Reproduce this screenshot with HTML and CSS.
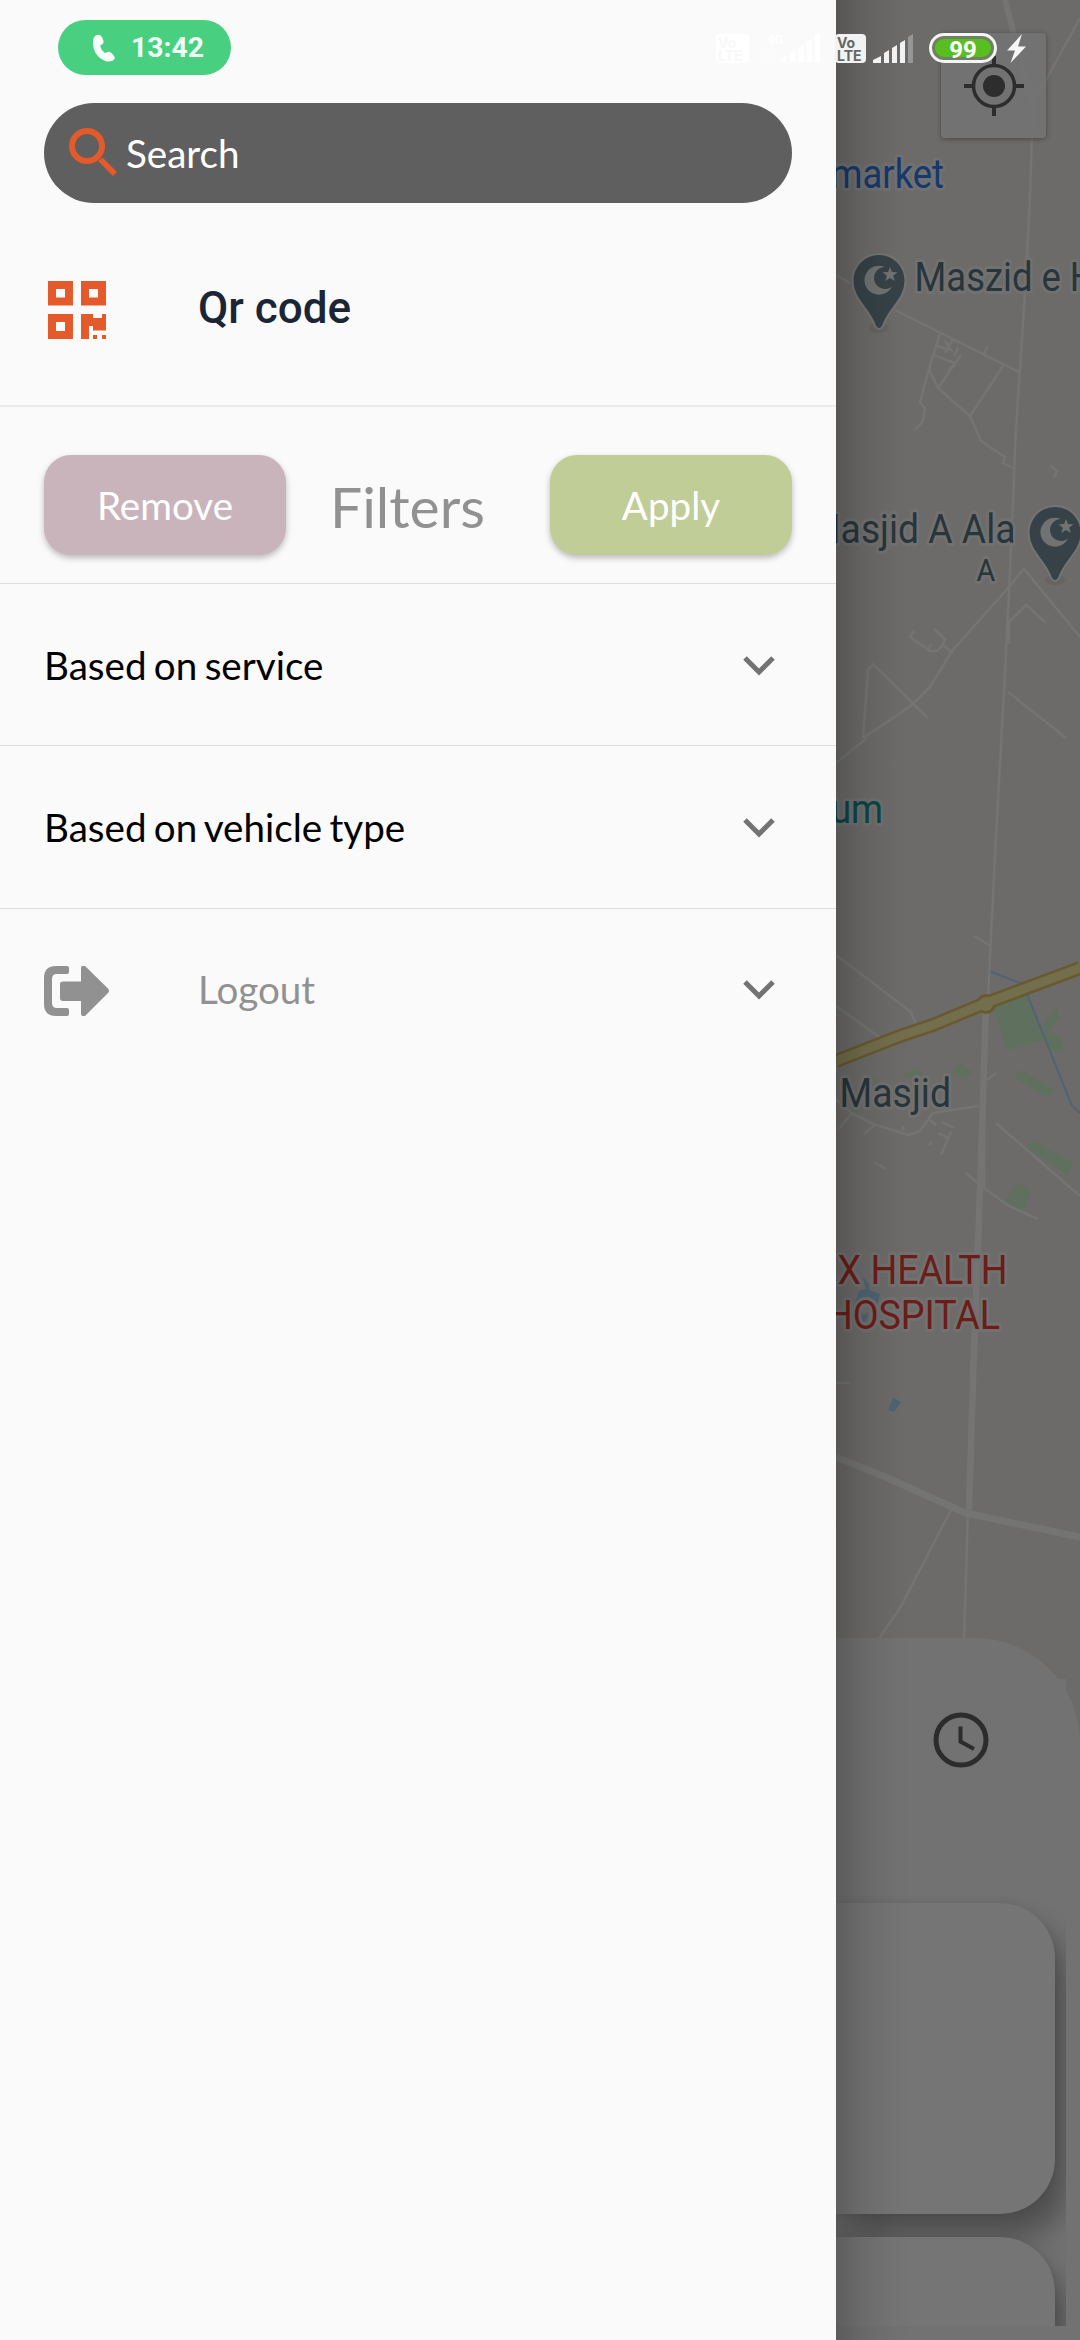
FILE: index.html
```html
<!DOCTYPE html>
<html lang="en">
<head>
<meta charset="utf-8">
<title>Menu</title>
<link rel="stylesheet" href="styles.css">
</head>
<body>
<div class="screen">
  <aside class="drawer">
    <div class="search">
      <svg class="search-icon" viewBox="0 0 48 48"><circle cx="18" cy="18" r="15" fill="none" stroke="#e55a2b" stroke-width="6"/><path d="M29 33 L33.500 29.500 L48 44 L44 48 L30 34Z" fill="#e55a2b"/></svg>
      <span>Search</span>
    </div>
    <div class="qr-row">
      <svg class="qr-icon" viewBox="0 0 58 58"><path fill="#e55a2b" fill-rule="evenodd" d="M0 0h25v24.500H0zM8 8v8.500h9V8zM33 0h25v24.500H33zM41 8v8.500h9V8zM0 33h25v25H0zM8 41v9h9v-9zM33 33h12v4h9v-4h4v16.500H45V45h-4v13h-8zM45 54h4v4h-4zM54 54h4v4h-4z"/></svg>
      <span>Qr code</span>
    </div>
    <div class="filters">
      <button class="btn remove">Remove</button>
      <h2>Filters</h2>
      <button class="btn apply">Apply</button>
    </div>
    <div class="row ruled">
      <span>Based on service</span>
      <svg class="chevron" viewBox="0 0 32 20"><path d="M2 2 L16 16 L30 2" /></svg>
    </div>
    <div class="row ruled">
      <span>Based on vehicle type</span>
      <svg class="chevron" viewBox="0 0 32 20"><path d="M2 2 L16 16 L30 2" /></svg>
    </div>
    <div class="row logout">
      <svg class="logout-icon" viewBox="0 0 65 50"><path fill="#919191" d="M12 0h11q2 0 2 2v4q0 2-2 2H13q-5 0-5 5v24q0 5 5 5h10q2 0 2 2v4q0 2-2 2H12Q0 50 0 38V12Q0 0 12 0zM37 2q0-3 4-2L64 22.500q2 2.500 0 4.500L41 50q-4 1-4-2.500V35H19q-3 0-3-3V18q0-2.500 3-2.500h18z"/></svg>
      <span>Logout</span>
      <svg class="chevron" viewBox="0 0 32 20"><path d="M2 2 L16 16 L30 2" /></svg>
    </div>
  </aside>

  <main class="backdrop">
    <svg class="map" viewBox="836 0 244 1740">
      <defs>
        <g id="pin">
          <ellipse cx="0" cy="47" rx="10" ry="5" fill="#656462"/>
          <path d="M0 -27C15 -27 26.500 -15 26.500 0C26.500 19 9 28 4 45Q0 51 -4 45C-9 28 -26.500 19 -26.500 0C-26.500 -15 -15 -27 0 -27Z" fill="#364247" stroke="#737474" stroke-width="2"/>
          <path d="M6 -14A14.500 14.500 0 1 0 13 5.500A11 11 0 1 1 6 -14Z" fill="#717373"/>
          <path d="M11 -14l2 5 5.500.3-4.300 3.500 1.600 5.200-4.800-3-4.700 3 1.600-5.200-4.300-3.500 5.500-.3z" fill="#717373"/>
        </g>
      </defs>
      <rect x="836" width="244" height="1740" fill="#6c6b69"/>
      <g fill="#60705f">
        <path d="M993 1006L1026 995L1045 1039L1007 1051ZM1042 1027L1055 1007L1060 1017L1047 1034ZM1045 1036L1050 1032L1061 1039L1065 1049L1053 1054ZM1022 1070L1057 1091L1047 1097L1014 1077ZM951 1073L960 1061L972 1072L965 1080ZM903 1075L915 1069L923 1074L916 1081ZM874 1077L880 1080L874 1086ZM850 1108L860 1105L856 1114ZM1033 1140L1074 1163L1068 1176L1027 1147ZM1018 1182L1032 1190L1023 1210L1004 1202Z"/>
      </g>
      <path d="M989 971L1023 984L1072 1106L1080 1113" fill="none" stroke="#4f6475" stroke-width="2"/>
      <g fill="#4e6373"><path d="M862 1276l7 8v6l11 4-3 12h-23l5-15 7-2zM861 1312l3 3 4-3q0 9-4 10-4 0-3-10zM893 1398l8 4-7 10-6-2z"/></g>
      <g class="roads">
        <path d="M1033 90C1030 260 1020 350 1015 450C1008 650 1000 740 988 999M1080 18L1046 80Q1040 95 1033 96M836 275L850 283M895 310L1019 372M940 334L930 365V372L938 388L970 416L981 441L1005 457L1003 463L1015 469M930 365L920 402L925 408L923 421L915 430M938 388L961 355M970 416L1003 366M937 346L951 350L945 341M933 355L955 363L948 371M945 353L953 339M958 347L954 356M984 353L988 346M1051 466L1057 471L1054 478M863 738L868 670L873 664L928 718M863 738L912 705L930 687L952 651L1008 588L1024 569L1080 637M953 653L943 645L937 651H930L910 637L914 631M934 629L945 639L943 645M928 650L931 644M1009 644V622L1026 605L1045 622M1008 692L1066 738M836 763L867 738M836 955L911 1012L916 1024M836 1006L882 1039M974 936L989 945M987 1080L996 1073"/>
        <path d="M836 1099L853 1114L876 1125L909 1135L920 1131L933 1113L978 1106M839 1129L852 1113M864 1134L876 1124M903 1131V1126M930 1120L936 1125M942 1122L954 1128M938 1133L948 1138M932 1142L929 1145M951 1132L941 1155M996 1123L1080 1196M874 1162L886 1169M966 1173L984 1188L1009 1206L1038 1219M984 1080V1188M836 1383H850M951 1510L900 1608L878 1640M968 1510L964 1640"/>
      </g>
      <g fill="none" stroke="#747473">
        <path d="M1005 0L1031 100" stroke-width="6"/>
        <path d="M986 1005L980 1190L974 1350L969 1510" stroke-width="6.500"/>
        <path d="M836 1457L890 1479L965 1513L1080 1537" stroke-width="7"/>
      </g>
      <path d="M836 1061L900 1036L933 1025L981 1005L1080 968" fill="none" stroke="#68592f" stroke-width="14"/>
      <circle cx="986" cy="1004" r="10" fill="#68592f"/>
      <path d="M836 1061L900 1036L933 1025L981 1005L1080 968" fill="none" stroke="#736e4c" stroke-width="9"/>
      <circle cx="986" cy="1004" r="7" fill="#736e4c"/>
      <use href="#pin" x="879" y="281"/>
      <use href="#pin" x="1055" y="533"/>
      <g class="labels">
        <text class="shop end" transform="translate(944 187.500) scale(.9 1)">market</text>
        <text transform="translate(914.500 291) scale(.9 1)">Maszid e H</text>
        <text class="end" transform="translate(1015.500 542.500) scale(.92 1)">Masjid A Ala</text>
        <text class="small" transform="translate(976.500 581) scale(.9 1)">A</text>
        <text class="museum end" transform="translate(883 822.500) scale(.9 1)">um</text>
        <text transform="translate(839.500 1107) scale(.925 1)">Masjid</text>
        <text class="health end" transform="translate(1007.500 1283.500) scale(.94 1)">X HEALTH</text>
        <text class="health end" transform="translate(1000 1329) scale(.94 1)">HOSPITAL</text>
      </g>
    </svg>
    <div class="locate">
      <svg viewBox="0 0 60 60"><g fill="none" stroke="#2d2d2d"><circle cx="30" cy="30" r="20.500" stroke-width="3.500"/><path d="M30 0V9M30 51V60M0 30H9M51 30H60" stroke-width="4"/></g><circle cx="30" cy="30" r="11" fill="#2d2d2d"/></svg>
    </div>
    <section class="sheet">
      <svg class="clock" viewBox="0 0 56 56"><g fill="none" stroke="#2c2c2c"><circle cx="28" cy="28" r="25" stroke-width="5"/><path d="M27.500 14.500V29.500L41 37" stroke-width="4"/></g></svg>
      <div class="list">
        <div class="card"></div>
        <div class="card"></div>
      </div>
    </section>
    <div class="edge-shadow"></div>
  </main>

  <header class="status">
    <div class="call">
      <svg viewBox="0 0 22 28"><path d="M2 2Q6-1 9 3L10.500 7Q11 10 7.500 11Q7 15 12 19L16 17.500Q20 19 22 24Q20 28 14 27.500Q0 23 0 8Q0 4 2 2Z" fill="#f7fff9"/></svg>
      <span>13:42</span>
    </div>
    <div class="indicators">
      <div class="volte faint"><span>Vo</span><span>LTE</span></div>
      <svg class="signal-faint" viewBox="0 0 57 32"><text x="4" y="12" font-size="13" font-family="Roboto" font-weight="700" fill="#fff">4G</text><path d="M3 18v12M9 18v12M17 30v-3l6-3v6zM27 30v-8l5-3v11zM36 30v-14l5-3v17zM44 30v-20l5-3v23zM52 30v-26l5-3v29z" fill="#fff" stroke="#fff" stroke-width=".5"/></svg>
      <div class="volte"><span>Vo</span><span>LTE</span></div>
      <svg class="signal" viewBox="0 0 41 29"><path d="M0 29v-3l8-4v7zM11 29v-10l5-3v13zM19 29v-15l5-3v18zM27 29v-20l5-3v23z" fill="#f2f2f2"/><path d="M35 29v-26l5-3v29z" fill="#969696"/></svg>
      <div class="battery"><span>99</span></div>
      <svg class="bolt" viewBox="0 0 19 29"><path d="M15 0L0 16.500H8L3.500 29L19 12.500H11Z" fill="#f5f5f5"/></svg>
    </div>
  </header>
</div>
</body>
</html>
```
FILE: styles.css
```css
* { box-sizing: border-box; }
body { margin: 0; background: #6c6b69; font-family: Lato, "Liberation Sans", sans-serif; }
svg { display: block; flex: none; }
.screen { position: relative; display: grid; grid-template-columns: 836px 244px; width: 1080px; height: 2340px; overflow: hidden; }

.drawer { background: #fafafa; padding-top: 103px; font-size: 38.600px; word-spacing: -2.500px; color: #000; }
.search { display: flex; align-items: center; gap: 9px; height: 100px; margin: 0 44px; padding-left: 25px; border-radius: 50px; background: #5f5f5f; color: #fff; }
.search-icon { width: 48px; height: 48px; margin-top: -2px; }
.qr-row { display: flex; align-items: center; height: 204px; padding: 12px 48px 0; gap: 92px; border-bottom: 2px solid #ececec; font: 500 44px Roboto, sans-serif; word-spacing: 0; color: #1b2535; }
.qr-icon { width: 58px; height: 58px; }
.qr-row span { margin-top: -4px; }
.filters { display: flex; justify-content: space-between; height: 177px; padding: 48px 44px 0; border-bottom: 1px solid #dedede; }
.filters h2 { margin: 0; padding: 18px 21px 0 0; font-size: 57px; line-height: 66px; font-weight: 400; color: #919191; }
.btn { width: 242px; height: 100px; padding: 0 0 1px; border: 0; border-radius: 27px; font: 400 38.600px Lato, sans-serif; color: #fff; box-shadow: 0 3px 6px rgba(0,0,0,.26); }
.remove { background: #c9b4bb; }
.apply { background: #c1cd97; }
.row { display: flex; align-items: center; justify-content: space-between; height: 162px; padding: 0 61px 0 44px; }
.ruled { border-bottom: 1px solid #dedede; }
.ruled + .ruled { height: 163px; }
.chevron { width: 32px; height: 20px; margin-top: 2px; }
.chevron path { fill: none; stroke: #737373; stroke-width: 5; }
.logout { height: 160px; color: #919191; }
.logout-icon { width: 65px; height: 50px; margin-top: 4px; }
.logout span { flex: 1; padding-left: 89px; }

.backdrop { display: grid; grid-template: 2340px / 244px; overflow: hidden; }
.backdrop > * { grid-area: 1 / 1; }
.map { width: 244px; height: 1740px; }
.roads { fill: none; stroke: #747474; stroke-width: 2.500; }
.labels { font: 40.500px Roboto, sans-serif; fill: #28353a; stroke: #717171; stroke-width: 6px; stroke-linejoin: round; paint-order: stroke; }
.end { text-anchor: end; }
.small { font-size: 32px; }
.shop { fill: #16386b; }
.museum { fill: #0c4547; }
.health { fill: #6b1d18; font-size: 40px; }
.locate { align-self: start; justify-self: start; display: grid; place-items: center; width: 105px; height: 105px; margin: 33px 0 0 105px; border-radius: 4px; background: rgba(115,115,115,.92); box-shadow: 0 1px 5px rgba(0,0,0,.35); }
.locate svg { width: 60px; height: 60px; }
.sheet { position: relative; margin-top: 1638px; height: 702px; border-radius: 0 105px 0 0; background: #727272; }
.sheet::after { content: ""; position: absolute; top: 41px; right: 14px; width: 26px; height: 50px; background: #727272; }
.clock { width: 56px; height: 56px; margin: 74px 0 0 97px; }
.list { width: 230px; height: 484px; margin-top: 74px; padding-top: 61px; overflow: hidden; }
.card { height: 311px; width: 219px; margin-bottom: 23px; border-radius: 0 55px 55px 0; background: #757575; box-shadow: 12px 24px 30px rgba(0,0,0,.32), 0 0 8px rgba(0,0,0,.08); }
.sheet::before { content: ""; display: block; height: 74px; }
.sheet .clock { margin-top: 0; }
.edge-shadow { position: relative; width: 75px; background: linear-gradient(90deg, rgba(0,0,0,.2), rgba(0,0,0,.09) 35%, rgba(0,0,0,.02) 75%, transparent); }

.status { position: absolute; inset: 0 0 auto; display: flex; justify-content: space-between; padding: 20px 54px 0 58px; font-family: Roboto, sans-serif; }
.call { display: flex; align-items: center; width: 173px; height: 55px; padding-left: 35px; gap: 16px; border-radius: 28px; background: #49cf80; color: #f0fff5; font-size: 28.300px; font-weight: 700; }
.call svg { width: 22px; height: 28px; }
.indicators { display: flex; align-items: center; height: 56px; }
.volte { display: grid; width: 31px; height: 29px; padding: 3px 0 0 2px; border-radius: 4px; background: #f2f2f2; color: #666; font: 700 14px/12px Inter, sans-serif; }
.volte span { height: 12px; }
.faint { width: 33px; background: #fff; color: #f8f8f8; margin-right: 14px; }
.signal-faint { width: 57px; height: 32px; margin-right: 15px; }
.signal { width: 41px; height: 29px; margin: 0 15px 0 7px; }
.battery { display: grid; place-items: center; width: 68px; height: 30px; border: 3px solid #f4f4f4; border-radius: 15px; background: #58bf20 padding-box; box-shadow: inset 0 0 0 3px #718064; color: #fff; font-size: 24px; font-weight: 700; line-height: 24px; }
.battery span { padding-top: 2px; }
.bolt { width: 19px; height: 29px; margin-left: 10px; }
```
